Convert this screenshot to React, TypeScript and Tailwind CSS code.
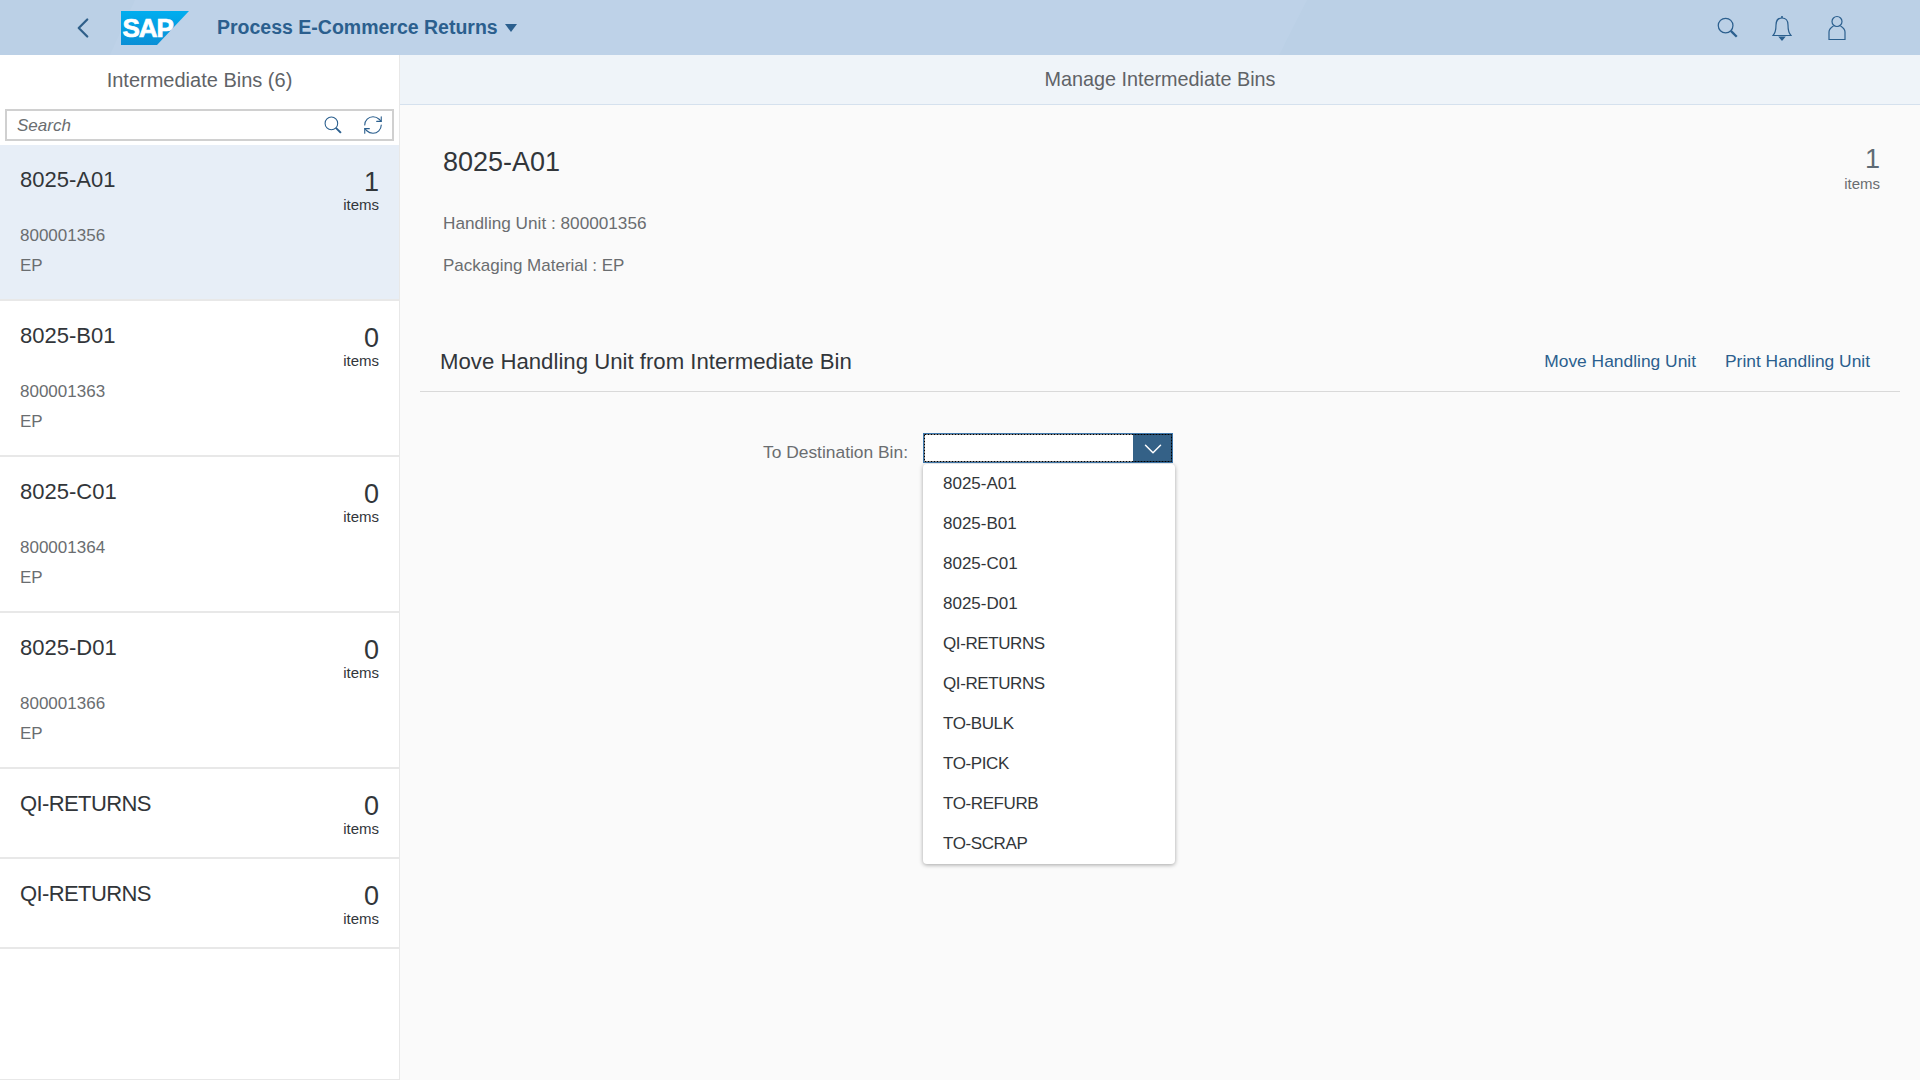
import React from "react";
import { ChevronDown, ChevronLeft, RefreshCw } from "lucide-react";

const bins = [
  { name: "8025-A01", count: 1, hu: "800001356", mat: "EP", active: true },
  { name: "8025-B01", count: 0, hu: "800001363", mat: "EP" },
  { name: "8025-C01", count: 0, hu: "800001364", mat: "EP" },
  { name: "8025-D01", count: 0, hu: "800001366", mat: "EP" },
  { name: "QI-RETURNS", count: 0 },
  { name: "QI-RETURNS", count: 0 },
];

const options = [
  "8025-A01",
  "8025-B01",
  "8025-C01",
  "8025-D01",
  "QI-RETURNS",
  "QI-RETURNS",
  "TO-BULK",
  "TO-PICK",
  "TO-REFURB",
  "TO-SCRAP",
];

const SearchIcon = ({ className }: { className?: string }) => (
  <svg viewBox="0 0 20 20" fill="none" stroke="currentColor" className={className}>
    <circle cx="8.2" cy="8.2" r="7" strokeWidth="1.2" />
    <path d="M13.2 13.2 L18.8 18.8" strokeWidth="2.2" />
  </svg>
);

const BinItem = ({ bin }: { bin: (typeof bins)[number] }) => (
  <div
    className={`border-b-2 border-[#e8e8e8] px-5 ${bin.active ? "bg-[#e7eef7]" : "bg-white"} ${bin.hu ? "h-[156px]" : "h-[90px]"}`}
  >
    <div className="flex justify-between">
      <div className={`pt-[20px] text-[22px] leading-[30px] text-[#32363a] ${bin.hu ? "" : "tracking-[-0.6px]"}`}>
        {bin.name}
      </div>
      <div className="pt-[23px] text-right">
        <div className="text-[27px] leading-[28px] text-[#32363a]">{bin.count}</div>
        <div className="text-[15px] leading-[17px] text-[#32363a]">items</div>
      </div>
    </div>
    {bin.hu && (
      <div className="pt-[8px] text-[17px] leading-[30px] text-[#6a6d70]">
        <div>{bin.hu}</div>
        <div>{bin.mat}</div>
      </div>
    )}
  </div>
);

export default function App() {
  return (
    <div className="h-[1080px] w-[1920px] overflow-hidden bg-[#fafafa] font-['Liberation_Sans',sans-serif]">
      <header className="relative flex h-[55px] items-center overflow-hidden bg-[#bbd0e6] pr-[74px]">
        {/* lighter diagonal band */}
        <div className="absolute inset-y-0 left-[110px] w-[1197px] bg-[#bed2e8] [clip-path:polygon(25px_0,100%_0,1169px_100%,0_100%)]" />
        <div className="relative flex flex-1 items-center">
          <ChevronLeft className="ml-[66px] h-[34px] w-[34px] text-[#2f5f8a]" strokeWidth={1.6} />
          <svg viewBox="0 0 69 34" className="ml-[21px] h-[34px] w-[69px]">
            <defs>
              <linearGradient id="sapBlue" x1="0" y1="0" x2="0" y2="1">
                <stop offset="0" stopColor="#00aeef" />
                <stop offset="1" stopColor="#0a8fd6" />
              </linearGradient>
            </defs>
            <polygon points="0,0 68,0 36,34 0,34" fill="url(#sapBlue)" />
            <text
              x="1.5"
              y="26"
              fontFamily="Liberation Sans, sans-serif"
              fontWeight="700"
              fontSize="26"
              fill="#fff"
              stroke="#fff"
              strokeWidth="0.7"
              letterSpacing="-1"
            >
              SAP
            </text>
          </svg>
          <span className="ml-[27px] text-[19.5px] font-bold text-[#2b5f8e]">Process E-Commerce Returns</span>
          <span className="ml-[7px] mt-[1px] h-0 w-0 border-x-[6px] border-t-[8px] border-x-transparent border-t-[#2b5f8e]" />
        </div>
        <div className="relative flex items-center gap-[34px] text-[#2b5f8e]">
          <SearchIcon className="h-[21px] w-[21px]" />
          <svg viewBox="0 0 20 26" fill="none" stroke="currentColor" strokeWidth="1.2" className="h-[26px] w-[20px]">
            <path d="M1 20.5 C3.5 18 4 15 4 10 C4 5.5 6.5 3 10 3 C13.5 3 16 5.5 16 10 C16 15 16.5 18 19 20.5 Z" />
            <path d="M10 1 V3" strokeWidth="1.6" />
            <path d="M7.5 22 H12.5 L10 25 Z" fill="currentColor" />
          </svg>
          <svg viewBox="0 0 18 26" fill="none" stroke="currentColor" strokeWidth="1.2" className="ml-[2px] h-[26px] w-[18px]">
            <circle cx="9" cy="6.5" r="5" />
            <path d="M5.5 11 C3 12.5 1 14.5 1 17 V24.5 H17 V17 C17 14.5 15 12.5 12.5 11" />
          </svg>
        </div>
      </header>

      <div className="flex h-[1025px]">
        <aside className="flex w-[400px] flex-col border-r border-b border-[#e8e8e8] bg-white">
          <div className="flex h-[50px] items-center justify-center text-[20px] text-[#5f6367]">Intermediate Bins (6)</div>
          <div className="px-[5px] pb-[4px] pt-[4px]">
            <div className="flex h-[32px] items-center border-2 border-[#d0d0d0] pl-[10px] pr-[8px]">
              <span className="mt-[1px] flex-1 text-[17px] italic text-[#6a6d70]">Search</span>
              <SearchIcon className="mr-[20px] h-[18px] w-[18px] text-[#2b5f8e]" />
              <RefreshCw className="h-[22px] w-[22px] text-[#2b5f8e]" strokeWidth={1.2} />
            </div>
          </div>
          {bins.map((bin, i) => (
            <BinItem key={i} bin={bin} />
          ))}
        </aside>

        <main className="flex-1">
          <div className="flex h-[50px] items-center justify-center border-b border-[#d5e1ee] bg-[#eff4f9] pt-[1px] text-[19.8px] text-[#5f6367]">
            Manage Intermediate Bins
          </div>
          <div className="flex justify-between pl-[43px] pr-[40px] pt-[39px]">
            <div>
              <div className="text-[27px] leading-[36px] text-[#32363a]">8025-A01</div>
              <div className="mt-[31px] text-[17.2px] leading-[24px] text-[#6a6d70]">Handling Unit : 800001356</div>
              <div className="mt-[19px] text-[17px] leading-[24px] text-[#6a6d70]">Packaging Material : EP</div>
            </div>
            <div className="text-right">
              <div className="text-[27px] leading-[31px] text-[#5f6b75]">1</div>
              <div className="text-[15px] leading-[17px] text-[#6a6d70]">items</div>
            </div>
          </div>

          <div className="mx-[20px] mt-[54px] flex h-[60px] items-center justify-between border-b border-[#d9d9d9] pl-[20px] pr-[30px]">
            <div className="text-[22.2px] text-[#32363a]">Move Handling Unit from Intermediate Bin</div>
            <div className="flex gap-[29px] text-[17.4px] text-[#2b5f8e]">
              <span>Move Handling Unit</span>
              <span>Print Handling Unit</span>
            </div>
          </div>

          <div className="mt-[41px] flex items-start">
            <div className="w-[508px] pt-[7px] text-right text-[17.4px] leading-[24px] text-[#6a6d70]">To Destination Bin:</div>
            <div className="relative ml-[15px] h-[30px] w-[250px]">
              <div className="flex h-full border border-[#3f78ad] bg-white">
                <div className="flex-1" />
                <div className="flex w-[39px] items-center justify-center bg-[#346187] pt-[1px]">
                  <ChevronDown className="h-[30px] w-[30px] text-white" strokeWidth={1.2} />
                </div>
              </div>
              {/* focus outline */}
              <svg viewBox="0 0 248 28" fill="none" className="pointer-events-none absolute left-[1px] top-[1px] h-[28px] w-[248px]">
                <rect x="0.5" y="0.5" width="247" height="27" stroke="#000" strokeDasharray="2 1" />
              </svg>
              <div className="absolute left-0 top-[31px] h-[400px] w-[252px] rounded-[4px] bg-white shadow-[0_1px_4px_rgba(0,0,0,0.35)]">
                {options.map((o, i) => (
                  <div
                    key={i}
                    className={`flex h-[40px] items-center pl-[20px] text-[17px] text-[#32363a] ${o.startsWith("8025") ? "" : "tracking-[-0.4px]"}`}
                  >
                    {o}
                  </div>
                ))}
              </div>
            </div>
          </div>
        </main>
      </div>
    </div>
  );
}
